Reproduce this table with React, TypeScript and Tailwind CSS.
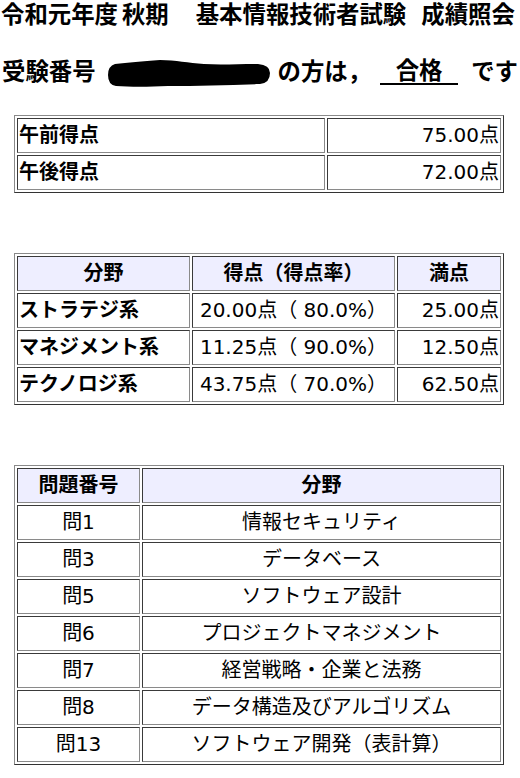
import { FC, Fragment, ReactNode } from "react";

const font = "font-['DejaVu_Sans','Noto_Sans_CJK_JP',sans-serif]";
const outer = "w-[490px] ml-[14px] border border-t-[#8a8a8a] border-l-[#8a8a8a] border-r-[#333] border-b-[#333] p-[2px] grid gap-[2px]";
const cell = "h-[35px] flex items-center px-[1px] pb-[2px] border border-t-[#3a3a3a] border-l-[#3a3a3a] border-r-[#8a8a8a] border-b-[#8a8a8a] whitespace-nowrap";

const Th: FC<{ children: ReactNode }> = ({ children }) => (
  <div className={`${cell} justify-center font-bold bg-[#eeeeff]`}>{children}</div>
);

const bunya = [
  ["ストラテジ系", "20.00点（ 80.0%）", "25.00点"],
  ["マネジメント系", "11.25点（ 90.0%）", "12.50点"],
  ["テクノロジ系", "43.75点（ 70.0%）", "62.50点"],
];

const mondai = [
  ["問1", "情報セキュリティ"],
  ["問3", "データベース"],
  ["問5", "ソフトウェア設計"],
  ["問6", "プロジェクトマネジメント"],
  ["問7", "経営戦略・企業と法務"],
  ["問8", "データ構造及びアルゴリズム"],
  ["問13", "ソフトウェア開発（表計算）"],
];

const App: FC = () => {
  return (
    <div className={`${font} bg-white text-black min-h-screen pb-4`}>
      {/* title */}
      <div className="flex h-[31px] items-center pl-[1px] text-[23.4px] font-bold whitespace-nowrap leading-[31px]">
        <span>令和元年度</span>
        <span className="ml-[4px]">秋期</span>
        <span className="ml-[27px]">基本情報技術者試験</span>
        <span className="ml-[15px]">成績照会</span>
      </div>

      {/* result line */}
      <div className="mt-[26px] flex h-[31px] items-start pl-[2px] text-[23.4px] font-bold whitespace-nowrap leading-[31px]">
        <span>受験番号</span>
        <svg className="ml-[12px] mt-[3px]" width="163" height="27" viewBox="0 0 163 27">
          <path
            d="M7 4 C20 3 34 1 52 0 C68 0 80 3 96 4 C112 5 130 4 150 4 Q162 5 162 13 Q162 23 152 24 C120 25 90 26 60 26 C40 27 22 27 8 26 Q0 25 0 15 Q0 6 7 4 Z"
            fill="#000"
          />
        </svg>
        <span className="ml-[7px]">の方は，</span>
        <span className="ml-[9px] mt-[2px] w-[78px] text-center leading-[24px] border-b-2 border-black">合格</span>
        <span className="ml-[13px]">です</span>
      </div>

      {/* 午前・午後 */}
      <div className={`${outer} mt-[27px] grid-cols-[308px_174px] text-[20px]`}>
        <div className={`${cell} font-bold`}>午前得点</div>
        <div className={`${cell} justify-end`}>75.00点</div>
        <div className={`${cell} font-bold`}>午後得点</div>
        <div className={`${cell} justify-end`}>72.00点</div>
      </div>

      {/* 分野別 */}
      <div className={`${outer} mt-[60px] grid-cols-[173px_203px_104px] text-[20px]`}>
        <Th>分野</Th>
        <Th>得点（得点率）</Th>
        <Th>満点</Th>
        {bunya.map((r) => (
          <Fragment key={r[0]}>
            <div className={`${cell} font-bold`}>{r[0]}</div>
            <div className={`${cell} justify-center`}>{r[1]}</div>
            <div className={`${cell} justify-end`}>{r[2]}</div>
          </Fragment>
        ))}
      </div>

      {/* 選択問題 */}
      <div className={`${outer} mt-[60px] grid-cols-[123px_359px] text-[20px]`}>
        <Th>問題番号</Th>
        <Th>分野</Th>
        {mondai.map((r) => (
          <Fragment key={r[0]}>
            <div className={`${cell} justify-center`}>{r[0]}</div>
            <div className={`${cell} justify-center`}>{r[1]}</div>
          </Fragment>
        ))}
      </div>
    </div>
  );
};

export default App;
